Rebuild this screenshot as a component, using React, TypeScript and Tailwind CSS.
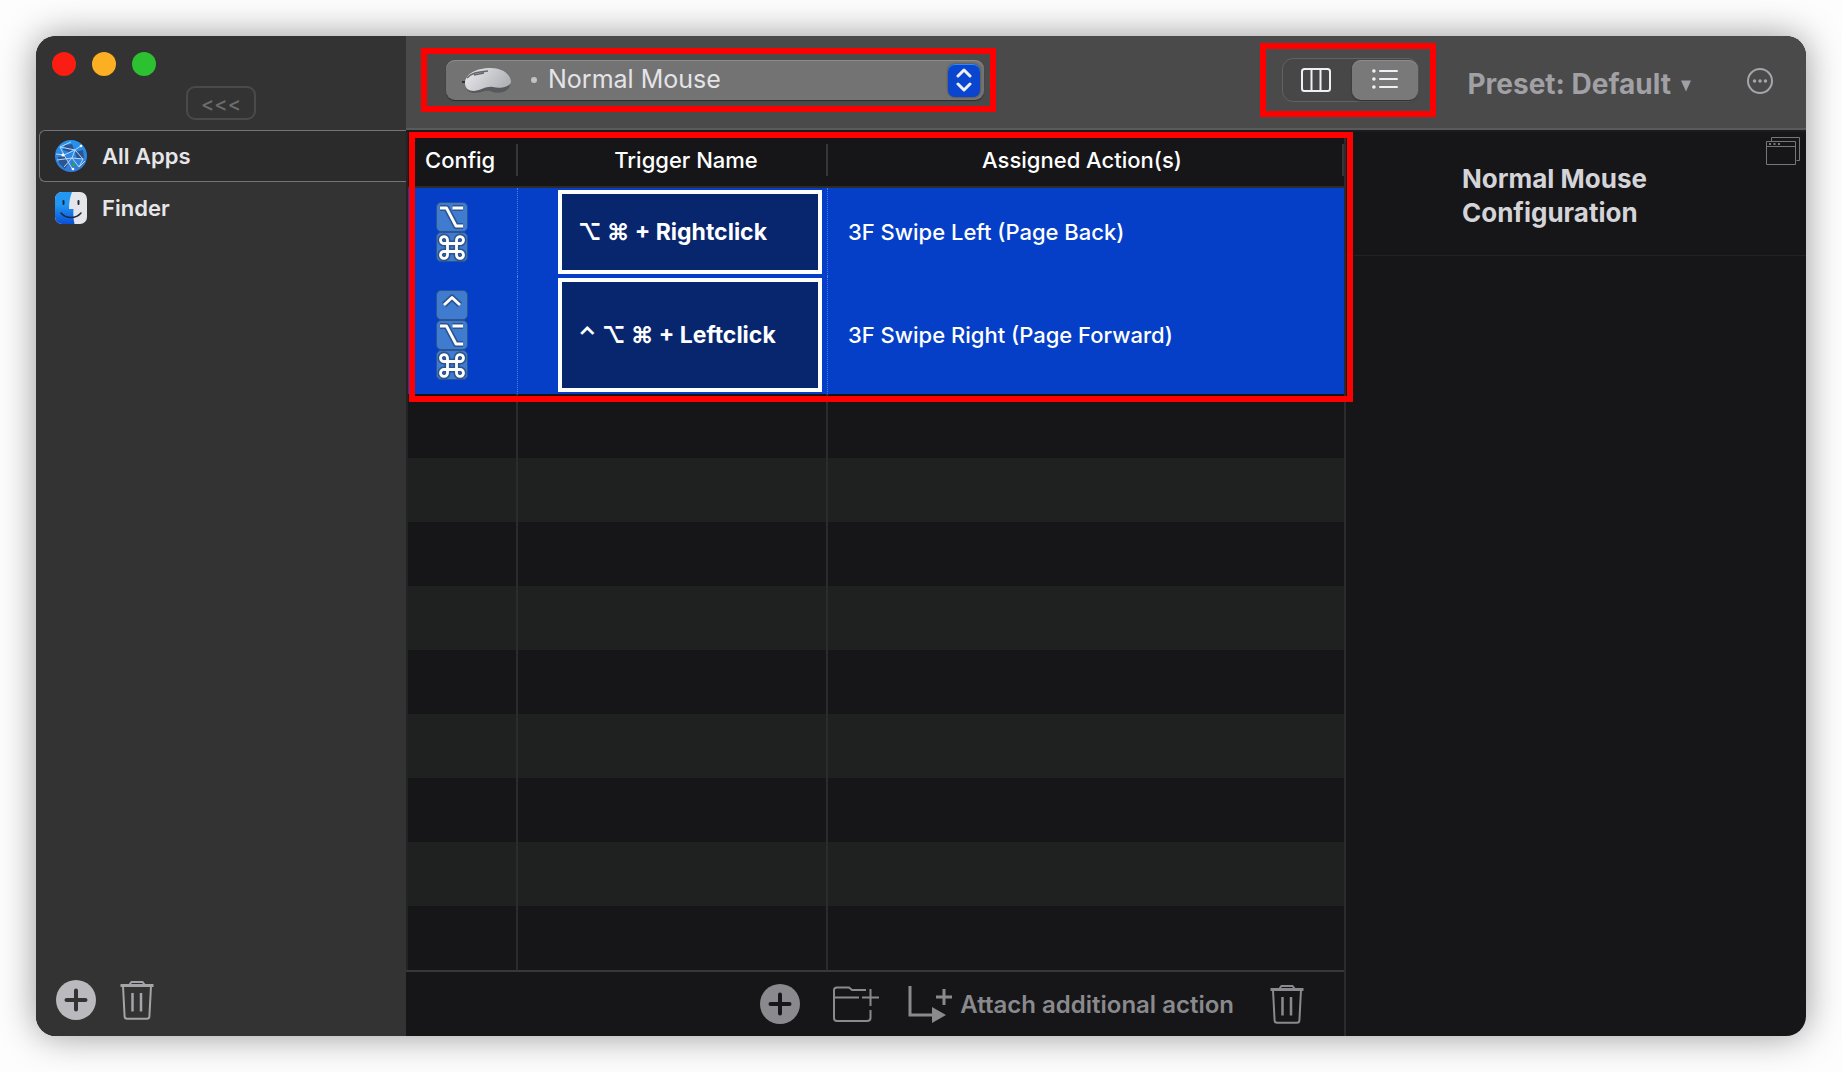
import React from "react";

const font = "font-['Inter','Liberation_Sans',sans-serif]";

function TrashIcon() {
  return (
    <svg width="34" height="40" viewBox="0 0 34 40" fill="none" stroke="currentColor" strokeWidth="2">
      <path d="M0.5 5.5H33.5" strokeWidth="3" />
      <path d="M9.5 4.5L11.5 2H22.5L24.5 4.5" />
      <path d="M3 6L4.6 36.4Q4.8 38.8 7 38.8H27Q29.2 38.8 29.4 36.4L31 6" />
      <path d="M12.5 13V31.5M21 13V31.5" strokeWidth="2.5" />
    </svg>
  );
}

function PlusCircle({ plus }: { plus: string }) {
  return (
    <svg width="40" height="40" viewBox="0 0 40 40">
      <circle cx="20" cy="20" r="20" fill="currentColor" />
      <path d="M20 10.5V29.5M10.5 20H29.5" stroke={plus} strokeWidth="4" strokeLinecap="round" />
    </svg>
  );
}

function GlobeIcon() {
  return (
    <svg width="32" height="32" viewBox="0 0 32 32">
      <defs>
        <linearGradient id="globe" x1="0" y1="0" x2="0" y2="1">
          <stop offset="0" stopColor="#2593f0" />
          <stop offset="1" stopColor="#3478d4" />
        </linearGradient>
      </defs>
      <circle cx="16" cy="16" r="16" fill="url(#globe)" />
      <path d="M10 5L17 4L19 9L14 12L8 10ZM3 17L9 16L14 22L10 29L4 23ZM20 12L28 10L29 18L22 19Z" fill="#2b5590" />
      <g fill="none" stroke="#b9d6f7" strokeWidth="1">
        <path d="M1 14L9 15L20 10L27 5M9 15L5 7L16 2M9 15L18 30M20 10L17 18L28 19M17 18L9 27M17 18L24 27L30 21M20 10L28 19L24 27M5 7L20 10M2 20L17 18" />
      </g>
      <g fill="#ffffff">
        <circle cx="8" cy="15" r="1.6" />
        <circle cx="26" cy="6" r="1.3" />
        <circle cx="18" cy="29" r="1.3" />
      </g>
      <path d="M17 23H20V26H17Z" fill="#27a64a" />
    </svg>
  );
}

function FinderIcon() {
  return (
    <svg width="32" height="32" viewBox="0 0 32 32">
      <defs>
        <linearGradient id="finderBlue" x1="0" y1="0" x2="0" y2="1">
          <stop offset="0.4" stopColor="#2196f3" />
          <stop offset="1" stopColor="#0a4fd6" />
        </linearGradient>
        <clipPath id="finderClip">
          <rect width="32" height="32" rx="7" />
        </clipPath>
      </defs>
      <g clipPath="url(#finderClip)">
        <rect width="32" height="32" fill="#e4e6ea" />
        <path d="M0 0H17C15 5 14 10 14 17H18.5C18 22 18.5 27 19.5 32H0Z" fill="url(#finderBlue)" />
        <path d="M8.5 9V12M23.5 9V12" stroke="#1b2a3d" strokeWidth="2" strokeLinecap="round" />
        <path d="M6 21C11 27 21 27 26 21" fill="none" stroke="#1b2a3d" strokeWidth="1.5" strokeLinecap="round" />
      </g>
    </svg>
  );
}

function MouseIcon() {
  return (
    <svg width="50" height="28" viewBox="0 0 50 28">
      <defs>
        <linearGradient id="mouseBody" x1="0" y1="0" x2="1" y2="0.4">
          <stop offset="0" stopColor="#ececef" />
          <stop offset="1" stopColor="#b3b4b9" />
        </linearGradient>
      </defs>
      <path d="M0 16H5" stroke="#333333" strokeWidth="2" />
      <path d="M4 18C3 24 7 27 13 27C20 27 22 24 28 25C36 29 48 26 48 18L44 14Z" fill="#58595d" />
      <path d="M3 17C3 9 13 2 29 2C41 2 49 9 49 16C48 21 38 23 31 21C24 20 20 24 12 25C6 25 3 22 3 17Z" fill="url(#mouseBody)" />
      <path d="M5 12C9 7 15 6 26 5M12 9L22 7" fill="none" stroke="#66676c" strokeWidth="1.5" />
    </svg>
  );
}

const optionPath = "M4 6H10.5L20 24H27M16.5 6H27";
const commandPath =
  "M11.5 11.5H20.5V19.5H11.5ZM11.5 11.5H8.5A3.5 3.5 0 1 1 11.5 8ZM20.5 11.5V8A3.5 3.5 0 1 1 23.5 11.5ZM20.5 19.5H23.5A3.5 3.5 0 1 1 20.5 23ZM11.5 19.5V23A3.5 3.5 0 1 1 8.5 19.5Z";
const controlPath = "M8 15L16 7.5L24 15";

const keyPaths: Record<string, string> = {
  Option: optionPath,
  Command: commandPath,
  Control: controlPath,
};

function KeyCap({ name }: { name: string }) {
  return (
    <svg width="32" height="30" viewBox="0 0 32 30" role="img" aria-label={name} className="block">
      <rect x="0.5" y="0.5" width="31" height="29" rx="4.5" fill="#3f7bcf" stroke="#2c5590" />
      <path d={keyPaths[name]} fill="none" stroke="#2c5590" strokeWidth="6" strokeLinejoin="round" />
      <path d={keyPaths[name]} fill="none" stroke="#ffffff" strokeWidth="2.8" strokeLinejoin="round" />
    </svg>
  );
}

const triggers = [
  {
    keys: ["Option", "Command"],
    label: "⌥ ⌘ + Rightclick",
    action: "3F Swipe Left (Page Back)",
    row: "h-[88px]",
    box: "h-[84px]",
  },
  {
    keys: ["Control", "Option", "Command"],
    label: "⌃ ⌥ ⌘ + Leftclick",
    action: "3F Swipe Right (Page Forward)",
    row: "h-[118px]",
    box: "h-[114px]",
  },
];

function Sidebar() {
  return (
    <aside className="flex w-[370px] shrink-0 flex-col bg-[#333333]">
      <div className="flex h-[94px] flex-col">
        <div className="flex gap-4 pt-4 pl-4">
          <button aria-label="Close" className="size-6 rounded-full bg-[#fb1d12]" />
          <button aria-label="Minimize" className="size-6 rounded-full bg-[#fdaf24]" />
          <button aria-label="Zoom" className="size-6 rounded-full bg-[#2bc131]" />
        </div>
        <button className="mt-[10px] ml-[150px] h-[34px] w-[70px] rounded-[9px] border-2 border-[#4a4a4a] text-xl leading-8 font-medium text-[#6c6c6c]">
          &lt;&lt;&lt;
        </button>
      </div>
      <nav className="flex flex-col pl-[3px] text-[22px] font-semibold text-[#e6e6ea]">
        <a href="#all" className="flex h-[52px] items-center gap-[15px] rounded-l-md border border-r-0 border-[#747474] bg-[#2b2b2b] pl-[15px]">
          <GlobeIcon />
          All Apps
        </a>
        <a href="#finder" className="flex h-[52px] items-center gap-[15px] pl-4">
          <FinderIcon />
          Finder
        </a>
      </nav>
      <div className="mt-auto flex items-center gap-6 pb-4 pl-5">
        <button aria-label="Add app" className="text-[#b9b9be]">
          <PlusCircle plus="#333333" />
        </button>
        <button aria-label="Delete app" className="text-[#a5a5a9]">
          <TrashIcon />
        </button>
      </div>
    </aside>
  );
}

function Toolbar() {
  return (
    <header className="flex h-24 items-start border-b-2 border-[#1c1c1e] bg-[#4a4a4a] shadow-[inset_0_-2px_0_#5a5a5a]">
      <div className="mt-3 ml-[15px] border-6 border-[#fe0000] py-[6px] pr-[6px] pl-[19px]">
        <div className="relative flex h-10 w-[538px] items-center rounded-[9px] bg-[#737373] pl-4 shadow-[0_1px_1px_#2c2c2c,inset_0_1px_0_#8c8c8c]">
          <MouseIcon />
          <span className="ml-[19px] size-[6px] rounded-full bg-[#c4c4c8]" />
          <select
            aria-label="Device"
            className="absolute inset-0 h-10 w-full appearance-none pl-[102px] text-[25px] text-[#e4e4e8]"
          >
            <option>Normal Mouse</option>
          </select>
          <span className="pointer-events-none relative mr-1 ml-auto flex h-[33px] w-8 items-center justify-center rounded-[7px] bg-[#0a45d0] shadow-[0_0_2px_#333333,inset_0_1px_0_#2f8cf0]">
            <svg width="16" height="24" viewBox="0 0 16 24" fill="none" stroke="#f0f0f4" strokeWidth="3" strokeLinecap="round" strokeLinejoin="round">
              <path d="M2 8L8 2L14 8M2 16L8 22L14 16" />
            </svg>
          </span>
        </div>
      </div>
      <div className="mt-[7px] ml-auto border-6 border-[#fe0000] py-[9px] pr-[11px] pl-4">
        <div className="flex h-11 w-[137px] items-center rounded-[11px] border border-[#626262] bg-[#474747]">
          <button aria-label="Column view" className="flex h-10 flex-1 items-center justify-center pr-1 text-[#f0f0f4]">
            <svg width="30" height="24" viewBox="0 0 30 24" fill="none" stroke="currentColor" strokeWidth="2">
              <rect x="1" y="1" width="28" height="22" rx="2.5" />
              <path d="M10.5 1V23M19.5 1V23" />
            </svg>
          </button>
          <button aria-label="List view" aria-pressed="true" className="flex h-10 w-[66px] items-center justify-center rounded-[9px] bg-[#797979] pb-[2px] text-[#f0f0f4] shadow-[0_1px_2px_#2c2c2c,inset_0_1px_0_#8c8c8c]">
            <svg width="26" height="20" viewBox="0 0 26 20" fill="none" stroke="currentColor" strokeWidth="2" strokeLinecap="round">
              <path d="M8 2H25M8 10H25M8 18H25" />
              <path d="M1.8 2H2M1.8 10H2M1.8 18H2" strokeWidth="3.4" />
            </svg>
          </button>
        </div>
      </div>
      <button className="mt-7 ml-[31px] flex items-center gap-[9px] text-[28px] leading-10 font-bold text-[#a0a0a5]">
        Preset: Default
        <svg width="12" height="12" viewBox="0 0 12 12" fill="currentColor" className="mt-1">
          <path d="M1 0.5H11L6 11.5Z" />
        </svg>
      </button>
      <button aria-label="More" className="mt-8 mr-[33px] ml-[55px] text-[#a5a5aa]">
        <svg width="26" height="26" viewBox="0 0 26 26" fill="none" stroke="currentColor" strokeWidth="2">
          <circle cx="13" cy="13" r="12" />
          <path d="M7.5 13H7.6M13 13H13.1M18.4 13H18.5" strokeWidth="3.4" strokeLinecap="round" />
        </svg>
      </button>
    </header>
  );
}

function TriggerTable() {
  return (
    <div className="relative flex-1">
      <table className="w-full table-fixed border-separate border-spacing-0 text-[22px]">
        <colgroup>
          <col className="w-[110px]" />
          <col className="w-[310px]" />
          <col />
        </colgroup>
        <thead>
          <tr className="h-14 text-white">
            <th className="border-b-2 border-[#2b2b2c] p-0 pt-[2px] font-medium">
              <div className="flex h-8 items-center border-r-2 border-[#363637] pl-[17px]">Config</div>
            </th>
            <th className="border-b-2 border-[#2b2b2c] p-0 pt-[2px] font-medium">
              <div className="flex h-8 items-center justify-center border-r-2 border-[#363637] pl-7">Trigger Name</div>
            </th>
            <th className="border-b-2 border-[#2b2b2c] p-0 pt-[2px] font-medium">
              <div className="flex h-8 items-center justify-center border-r-2 border-[#363637] pr-[6px]">Assigned Action(s)</div>
            </th>
          </tr>
        </thead>
        <tbody>
          {triggers.map((t) => (
            <tr key={t.label} className={`${t.row} bg-[#053fc8] text-white`}>
              <td className="border-r border-dotted border-[#4c7fe0] p-0 pl-7">
                {t.keys.map((k) => (
                  <KeyCap key={k} name={k} />
                ))}
              </td>
              <td className="border-r border-dotted border-[#4c7fe0] p-0 pr-[5px] pl-10">
                <div className={`${t.box} flex items-center border-4 border-white bg-[#08266e] pl-4 text-[23px] font-bold whitespace-nowrap`}>
                  {t.label}
                </div>
              </td>
              <td className="p-0 pl-5 font-medium">{t.action}</td>
            </tr>
          ))}
          {Array.from({ length: 9 }, (_, i) => (
            <tr key={i} className="h-16 bg-[#161618] even:bg-[#1f2120]">
              <td className="border-r-2 border-[#2b2b2d] p-0" />
              <td className="border-r-2 border-[#2b2b2d] p-0" />
              <td className="p-0" />
            </tr>
          ))}
        </tbody>
      </table>
      <div className="pointer-events-none absolute top-0 -right-[9px] left-px h-[270px] border-6 border-[#fe0000]" />
    </div>
  );
}

function Footer() {
  return (
    <footer className="flex h-[66px] items-center justify-end border-t-2 border-[#38383a] pr-10 text-[#8a8a8e]">
      <button aria-label="Add trigger" className="mr-8">
        <PlusCircle plus="#161618" />
      </button>
      <button aria-label="Add group" className="mr-7">
        <svg width="48" height="38" viewBox="0 0 48 38" fill="none" stroke="currentColor" strokeWidth="2">
          <path d="M34 5H20L17 2.5H5Q2 2.5 2 5V33Q2 36 5 36H35Q38.5 36 38.5 33V25M2 12.5H27" />
          <path d="M38.5 4V21M30 12.5H47" />
        </svg>
      </button>
      <button className="mr-9 flex items-center gap-2 text-2xl font-semibold">
        <svg width="44" height="40" viewBox="0 0 44 40" fill="none" stroke="currentColor" strokeWidth="3">
          <path d="M2 2V31H26" />
          <path d="M36 5V21M28 13H44" />
          <path d="M24 23L38 31L24 39Z" fill="currentColor" stroke="none" />
        </svg>
        <span className="pt-[2px]">Attach additional action</span>
      </button>
      <button aria-label="Delete trigger">
        <TrashIcon />
      </button>
    </footer>
  );
}

function ConfigPanel() {
  return (
    <section className="w-[460px] shrink-0">
      <div className="flex h-[124px] items-start justify-between border-b border-[#222224] pr-[6px] pl-[116px]">
        <h1 className="w-60 pt-[30px] text-[26px] leading-[34px] font-bold text-[#d4d4d8]">
          Normal Mouse Configuration
        </h1>
        <button aria-label="Open in window" className="mt-[5px] text-[#77777a]">
          <svg width="34" height="28" viewBox="0 0 34 28" fill="none" stroke="currentColor">
            <path d="M5.5 4V0.5H33.5V23.5H30.5" />
            <path d="M0.5 4.5H29.5V27.5H0.5ZM0.5 9.5H29.5" />
            <path d="M3 7H5M7.5 7H9.5M12 7H14" strokeWidth="2" />
          </svg>
        </button>
      </div>
    </section>
  );
}

export default function App() {
  return (
    <div className={`${font} flex min-h-screen bg-[#fdfdfd] p-9`}>
      <div className="flex flex-1 overflow-hidden rounded-[20px] bg-[#161618] shadow-[0_0_36px_rgba(0,0,0,0.4)]">
        <Sidebar />
        <div className="flex min-w-0 flex-1 flex-col">
          <Toolbar />
          <div className="flex flex-1">
            <main className="flex min-w-0 flex-1 flex-col border-r-2 border-[#2b2b2d]">
              <div className="flex flex-1 border-l-2 border-[#232324]">
                <TriggerTable />
              </div>
              <Footer />
            </main>
            <ConfigPanel />
          </div>
        </div>
      </div>
    </div>
  );
}
